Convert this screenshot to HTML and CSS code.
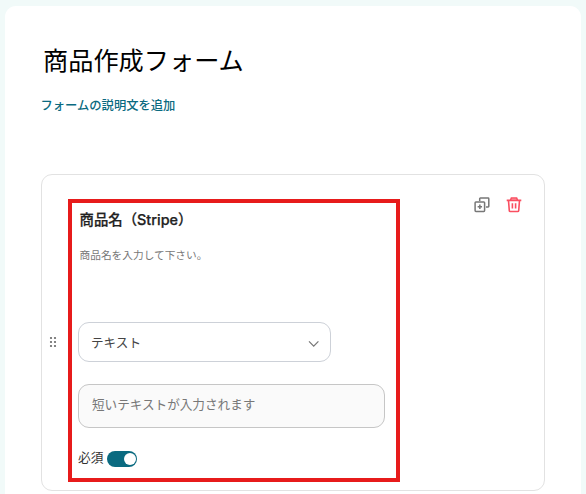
FILE: index.html
```html
<!DOCTYPE html>
<html lang="ja">
<head>
<meta charset="utf-8">
<title>商品作成フォーム</title>
<link rel="stylesheet" href="styles.css">
</head>
<body>
<main class="panel">
  <h1 class="title">商品作成フォーム</h1>
  <a class="add-description">フォームの説明文を追加</a>
  <section class="card">
    <div class="drag">
      <svg width="8" height="12" viewBox="0 0 8 12" fill="#666"><circle cx="2" cy="2" r="1.1"/><circle cx="6" cy="2" r="1.1"/><circle cx="2" cy="6" r="1.1"/><circle cx="6" cy="6" r="1.1"/><circle cx="2" cy="10" r="1.1"/><circle cx="6" cy="10" r="1.1"/></svg>
    </div>
    <div class="field">
      <h2 class="label">商品名（Stripe）</h2>
      <p class="hint">商品名を入力して下さい。</p>
      <div class="select"><span>テキスト</span>
        <svg width="12" height="8" viewBox="0 0 12 8" fill="none" stroke="#777" stroke-width="1.2"><path d="M1 1.3 5.7 6.2 10.4 1.3"/></svg>
      </div>
      <div class="preview">短いテキストが入力されます</div>
      <div class="required"><span>必須</span><span class="toggle"></span></div>
    </div>
    <div class="actions">
      <svg width="16" height="16" viewBox="0 0 16 16" fill="none" stroke="#777" stroke-width="1.5"><path d="M5.7 4V1.7q0-.7.7-.7h7.7q.7 0 .7.7v7.6q0 .7-.7.7H12"/><rect x="1.1" y="5" width="9.5" height="9.4" rx=".8"/><path d="M5.85 7.5v4.4M3.65 9.7h4.4"/></svg>
      <svg width="16" height="16" viewBox="0 0 16 16" fill="none" stroke="#fa4f61" stroke-width="1.6"><path d="M4.5 3 5.4 1h5.2l.9 2" fill="#fdb0b8"/><path d="M.7 3.4h14.6M2.5 3.5l.8 10.1q.1.9 1 .9h7.4q.9 0 1-.9l.8-10.1M6.4 6.2v5.2M9.6 6.2v5.2"/></svg>
    </div>
  </section>
</main>
</body>
</html>
```
FILE: styles.css
```css
* { box-sizing: border-box; }
body {
  margin: 0;
  padding: 6px 5px 0;
  height: 494px;
  overflow: hidden;
  background: #f1faf9;
  font-family: "Noto Sans CJK JP", sans-serif;
}
.panel {
  height: 500px;
  padding: 35px 36px 0;
  border-radius: 11px;
  background: #fff;
}
.title {
  margin: 0 0 0 2px;
  font-size: 25.2px;
  line-height: 36px;
  font-weight: 400;
  color: #000;
}
.add-description {
  display: block;
  margin: 18px 0 0 -.5px;
  font-size: 12.3px;
  line-height: 20px;
  font-weight: 500;
  color: #0a6a80;
}
.card {
  display: flex;
  width: 504px;
  height: 317px;
  margin-top: 59px;
  padding-top: 24px;
  border: 1px solid #e2e2e2;
  border-radius: 11px;
}
.drag {
  width: 26px;
  padding: 137px 0 0 7px;
}
.drag svg, .actions svg { display: block; }
.field {
  width: 332px;
  height: 283px;
  padding: 6px 6px 0;
  border: 4px solid #e71b1b;
}
.label {
  margin: 0 0 0 1.5px;
  font: 500 14.4px/22px Inter, "Noto Sans CJK JP", sans-serif;
  -webkit-text-stroke: .25px #222;
  color: #222;
}
.hint {
  margin: 15px 0 0 1.5px;
  font-size: 10.7px;
  line-height: 18px;
  color: #777;
}
.select {
  display: flex;
  align-items: center;
  justify-content: space-between;
  width: 253px;
  height: 40px;
  margin-top: 58px;
  padding: 0 10px 0 12px;
  border: 1px solid #cdd1d8;
  border-radius: 11px;
  font-size: 12.6px;
  color: #444;
}
.select span { margin-top: -2px; }
.select svg { margin-top: 3px; }
.preview {
  width: 307px;
  height: 44px;
  margin-top: 22px;
  padding-left: 13px;
  border: 1px solid #c6c6c6;
  border-radius: 11px;
  background: #fafafa;
  font-size: 12.6px;
  line-height: 38px;
  color: #777;
}
.required {
  display: flex;
  align-items: center;
  gap: 4px;
  margin-top: 19px;
  font-size: 12.7px;
  line-height: 20px;
  color: #333;
}
.toggle {
  display: flex;
  justify-content: flex-end;
  width: 30px;
  height: 16px;
  margin-top: 4px;
  padding: 2px 1px;
  border-radius: 8px;
  background: #0a6a80;
}
.toggle::after {
  content: "";
  width: 12px;
  height: 12px;
  border-radius: 50%;
  background: #fff;
}
.actions {
  display: flex;
  gap: 15.5px;
  margin: -2px 0 0 74px;
}
```
